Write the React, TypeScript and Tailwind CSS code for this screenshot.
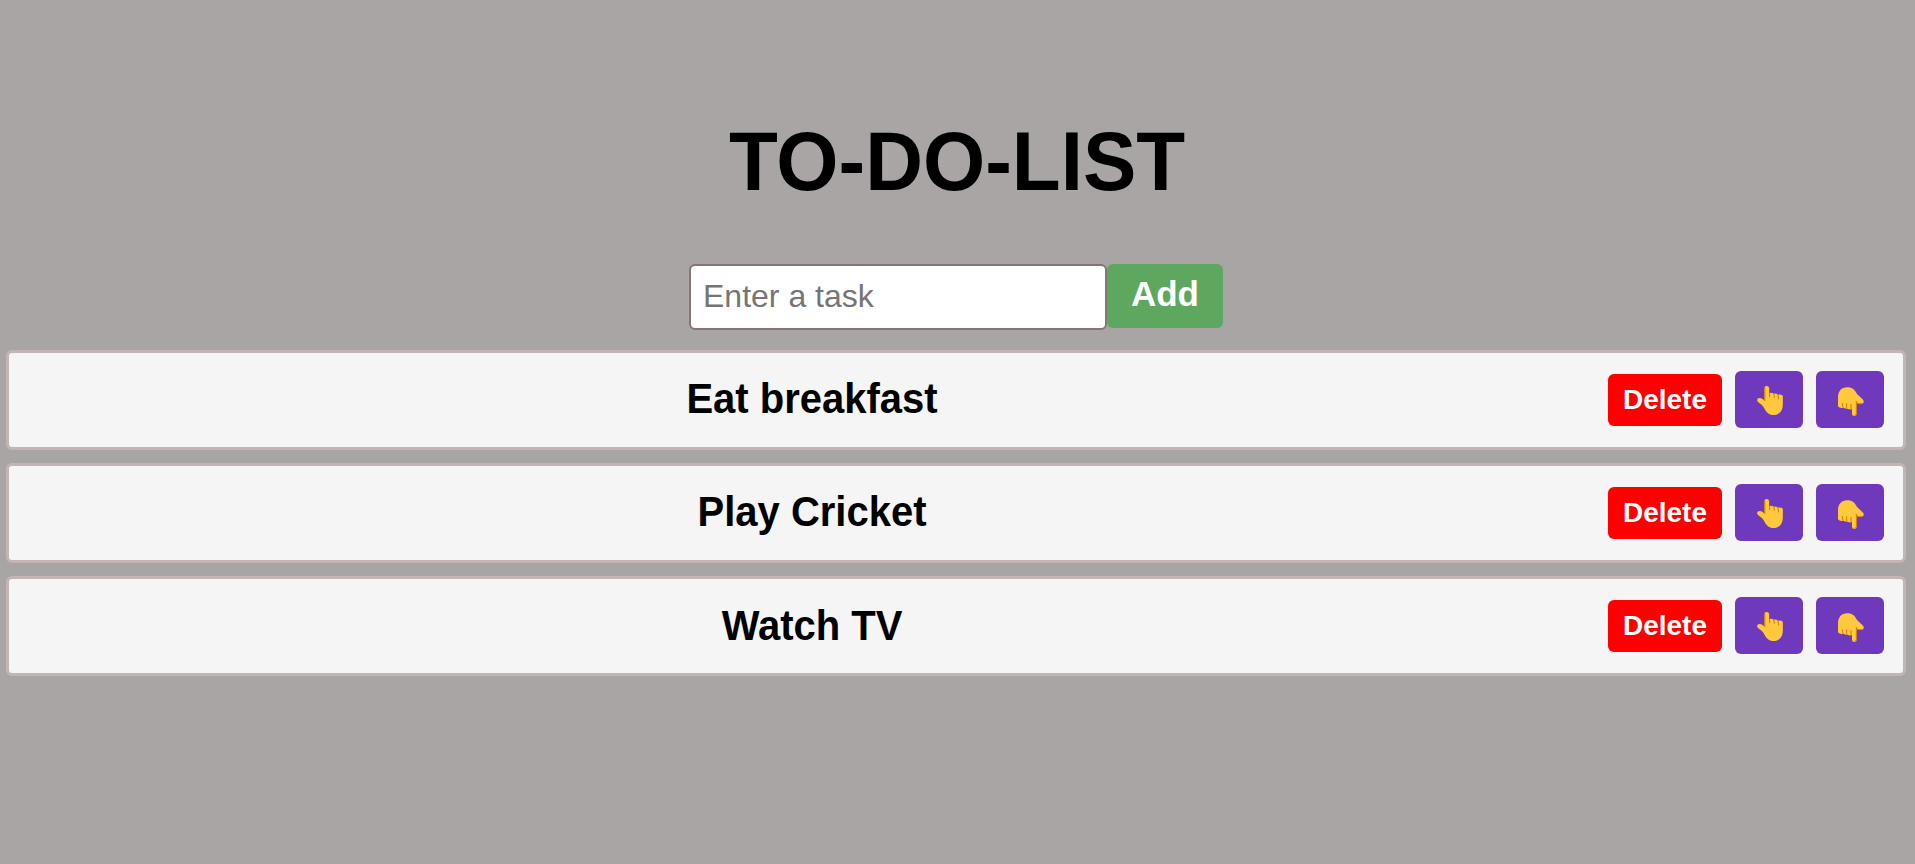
import { useState } from "react";

function HandUp() {
  return (
    <svg viewBox="78 75 84 93" className="h-[31px] w-7" aria-hidden="true">
      <path
        fill="#ffc83d"
        d="M103 85Q103 78 110 78T117.500 85V99Q125 97 131 101Q138 99 144 104Q153 102 158.500 107V134C158.500 153 147 165 130 165C117 165 109 157 104 147C99 137 93 133 85 127C78 121 82 114 89 114C95 114 99 117 103 122Z"
      />
      <path
        fill="none"
        stroke="#d67d00"
        strokeWidth="3"
        strokeLinecap="round"
        d="M104.500 84v38M119 100v10M132 103l1 9M144 106l2 11"
      />
    </svg>
  );
}

function HandDown() {
  return (
    <svg viewBox="78 78 84 93" className="h-[31px] w-7" aria-hidden="true">
      <path
        fill="#ffc83d"
        d="M81 139v-27c0-18 10-30 28-30c15 0 23 8 29 20l15 14c9 6 6 17-6 16l-10-2v31q0 7-7 7t-7-7v-14q-6 3-13-1q-7 1-12-3q-12 3-17-4z"
      />
      <path
        fill="none"
        stroke="#d67d00"
        strokeWidth="3"
        strokeLinecap="round"
        d="M94 131l2 11M107 131v13M120 133v13M136 124v37q-1 4-5 5M138 129q9 4 15 2"
      />
    </svg>
  );
}

export default function App() {
  const [tasks, setTasks] = useState(["Eat breakfast", "Play Cricket", "Watch TV"]);
  const [newTask, setNewTask] = useState("");

  const addTask = () => {
    if (newTask.trim() !== "") {
      setTasks([...tasks, newTask]);
      setNewTask("");
    }
  };

  const removeTask = (index: number) => setTasks(tasks.filter((_, i) => i !== index));

  const moveTask = (index: number, target: number) => {
    if (target < 0 || target >= tasks.length) return;
    const next = [...tasks];
    [next[index], next[target]] = [next[target], next[index]];
    setTasks(next);
  };

  return (
    <div className="min-h-screen bg-[#a9a5a4] pt-[116px] pr-[9px] pl-1.5 font-['Liberation_Sans',Arial,sans-serif] text-black">
      <h1 className="scale-y-104 pl-0.5 text-center text-[80px] leading-[92px] font-bold">TO-DO-LIST</h1>
      <div className="mt-14 flex items-start justify-center">
        <input
          type="text"
          placeholder="Enter a task"
          value={newTask}
          onChange={(e) => setNewTask(e.target.value)}
          className="h-[66px] w-[418px] rounded-md border-2 border-[#857575] bg-white px-3 pb-0.5 text-[32px] placeholder:text-[#757575]"
        />
        <button
          onClick={addTask}
          className="h-16 w-[116px] rounded-md bg-[#5ea75e] pb-[3px] text-[35px] font-bold text-white"
        >
          Add
        </button>
      </div>
      <ol className="mt-5 flex flex-col gap-[13px]">
        {tasks.map((task, index) => (
          <li
            key={index}
            className="flex h-[100px] items-center gap-[13px] rounded-md border-[3px] border-[#c4b4b4] bg-[#f5f5f5] px-[19px]"
          >
            <span className="flex-1 scale-y-104 pb-[3px] pl-px text-center text-[40px] leading-[46px] font-bold">
              {task}
            </span>
            <button
              onClick={() => removeTask(index)}
              className="h-[52px] w-[114px] rounded-md bg-[#ff0000] text-[28px] font-bold text-white"
            >
              Delete
            </button>
            <button
              aria-label="Move up"
              onClick={() => moveTask(index, index - 1)}
              className="mb-px flex h-[57px] w-[68px] items-center justify-center rounded-md bg-[#6f39bd] pt-0.5 pl-0.5"
            >
              <HandUp />
            </button>
            <button
              aria-label="Move down"
              onClick={() => moveTask(index, index + 1)}
              className="mb-px flex h-[57px] w-[68px] items-center justify-center rounded-md bg-[#6f39bd] pt-[3px] pl-px"
            >
              <HandDown />
            </button>
          </li>
        ))}
      </ol>
    </div>
  );
}
